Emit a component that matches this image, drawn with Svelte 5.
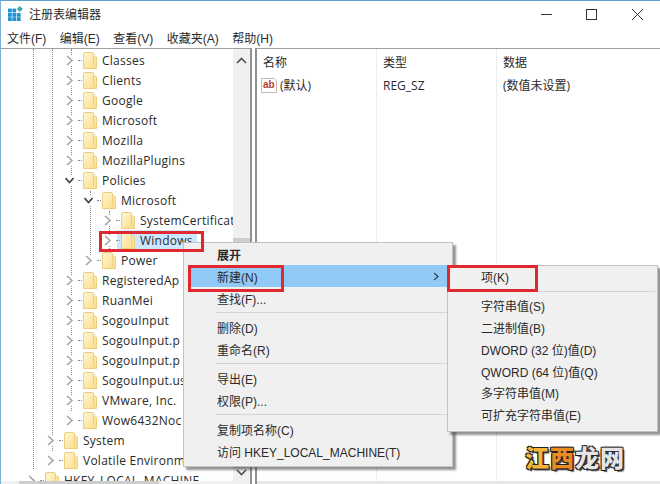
<script>
  const menus = ['文件(F)', '编辑(E)', '查看(V)', '收藏夹(A)', '帮助(H)'];
  const rows = [
    ['Classes', 2], ['Clients', 2], ['Google', 2], ['Microsoft', 2], ['Mozilla', 2], ['MozillaPlugins', 2],
    ['Policies', 2, true], ['Microsoft', 3, true], ['SystemCertificat', 4], ['Windows', 4, false, true], ['Power', 3],
    ['RegisteredAp', 2], ['RuanMei', 2], ['SogouInput', 2], ['SogouInput.p', 2], ['SogouInput.p', 2], ['SogouInput.us', 2],
    ['VMware, Inc.', 2], ['Wow6432Noc', 2], ['System', 1], ['Volatile Environm', 1], ['HKEY_LOCAL_MACHINE', 0]
  ];
  const guides = [
    { x: 32, top: 0, h: 420 }, { x: 51, top: 0, h: 402 }, { x: 70, top: 0, h: 362 },
    { x: 89, top: 142, h: 70 }, { x: 108, top: 162, h: 42 }
  ];
  const main = [
    [{ t: '展开', b: true }, { t: '新建(N)', hot: true, arrow: true }, { t: '查找(F)...' }],
    [{ t: '删除(D)' }, { t: '重命名(R)' }],
    [{ t: '导出(E)' }, { t: '权限(P)...' }],
    [{ t: '复制项名称(C)' }, { t: '访问 HKEY_LOCAL_MACHINE(T)' }]
  ];
  const sub = [
    [{ t: '项(K)' }],
    [{ t: '字符串值(S)' }, { t: '二进制值(B)' }, { t: 'DWORD (32 位)值(D)' }, { t: 'QWORD (64 位)值(Q)' }, { t: '多字符串值(M)' }, { t: '可扩充字符串值(E)' }]
  ];
</script>

<div class="win">
  <svg class="defs" width="0" height="0">
    <defs>
      <linearGradient id="fg" x1="0" y1="0" x2="1" y2="1">
        <stop offset="0" stop-color="#fff6d6"/><stop offset="1" stop-color="#fbdc85"/>
      </linearGradient>
    </defs>
  </svg>
  <header class="title">
    <svg class="logo" width="15" height="15" viewBox="0 0 15 15">
      <g fill="#1f93d2">
        <rect x="0" y="2.6" width="3.8" height="3.8"/><rect x="4.4" y="2.6" width="3.8" height="3.8"/>
        <rect x="0" y="7" width="3.8" height="3.8"/><rect x="4.4" y="7" width="3.8" height="3.8"/><rect x="8.8" y="7" width="3.8" height="3.8"/>
        <rect x="0" y="11.2" width="3.8" height="3.8"/><rect x="4.4" y="11.2" width="3.8" height="3.8"/><rect x="8.8" y="11.2" width="3.8" height="3.8"/>
      </g>
      <path d="M11.5 0 L15 3 L11.5 6 L9 3 Z" fill="#39a7b8"/>
    </svg>
    <span class="ttext">注册表编辑器</span>
    <div class="ctrls">
      <svg width="102" height="14" viewBox="0 0 102 14" fill="none" stroke="#333" stroke-width="1">
        <path d="M0 7.5H11"/>
        <rect x="45.5" y="2.5" width="10" height="10"/>
        <path d="M91 2L102 13M102 2L91 13"/>
      </svg>
    </div>
  </header>

  <nav class="menubar">
    {#each menus as m}<span>{m}</span>{/each}
  </nav>

  <div class="panes">
    <section class="left">
      <div class="tree">
        {#each guides as g}
          <i class="guide" style="left:{g.x}px;top:{g.top}px;height:{g.h}px"></i>
        {/each}
        {#each rows as [name, level, open, sel]}
          <div class="row" style="padding-left:{level * 19 + 26}px">
            {#if sel}<i class="selbar"></i>{/if}
            <svg class="chev" width="9" height="11" viewBox="0 0 9 11" fill="none" stroke={open ? '#404040' : '#a6a6a6'} stroke-width="1.6">
              {#if open}<path d="M0.5 3L4.5 7.5L8.5 3"/>{:else}<path d="M2 1L7 5.5L2 10"/>{/if}
            </svg>
            <i class="dash"></i>
            <svg class="folder" width="14" height="17" viewBox="0 0 14 17">
              <path d="M0.5 2Q0.5 0.5 2 0.5H9.5Q10.5 0.5 10.5 2V4H12Q13.5 4 13.5 5.5V16.5H0.5Z" fill="url(#fg)" stroke="#eccf7e"/>
              <path d="M10.5 4V14" stroke="#eccf7e" fill="none"/>
            </svg>
            <span class="label">{name}</span>
          </div>
        {/each}
      </div>
      <div class="vbar">
        <svg width="17" height="10" viewBox="0 0 17 10" fill="none" stroke="#505050" stroke-width="1.6"><path d="M4 8L8.5 3.5L13 8"/></svg>
        <div class="thumb"></div>
        <svg width="17" height="10" viewBox="0 0 17 10" fill="none" stroke="#505050" stroke-width="1.6"><path d="M4 2L8.5 6.5L13 2"/></svg>
      </div>
      <div class="hbar"><div class="hthumb"></div></div>
    </section>

    <section class="right">
      <div class="cols head">
        <span>名称</span><span>类型</span><span>数据</span>
      </div>
      <div class="cols">
        <span class="namecell">
          <svg width="16" height="15" viewBox="0 0 16 15">
            <path d="M0.5 0.5H13L15.5 3V14.5H0.5Z" fill="#fff" stroke="#c9b6ac"/>
            <text x="2" y="10" font-size="10" font-weight="700" font-family="Liberation Sans" fill="#c0392b">ab</text>
          </svg>
          (默认)
        </span>
        <span>REG_SZ</span>
        <span>(数值未设置)</span>
      </div>
      <div class="brand"><span class="o1">江</span><span class="o2">西</span><span class="w">龙网</span></div>
      <div class="hbar r"></div>
    </section>
  </div>

  <div class="menu m1">
    {#each main as group, i}
      {#if i}<hr />{/if}
      {#each group as it}
        <div class="item" class:hot={it.hot} class:b={it.b}>
          <span>{it.t}</span>
          {#if it.arrow}
            <svg width="6" height="9" viewBox="0 0 6 9" fill="none" stroke="#333" stroke-width="1.1"><path d="M1 0.8L5 4.5L1 8.2"/></svg>
          {/if}
        </div>
      {/each}
    {/each}
  </div>

  <div class="menu m2">
    {#each sub as group, i}
      {#if i}<hr />{/if}
      {#each group as it}
        <div class="item"><span>{it.t}</span></div>
      {/each}
    {/each}
  </div>

  <i class="mark k1"></i>
  <i class="mark k2"></i>
  <i class="mark k3"></i>
</div>

<style>
  :global(body) { margin: 0; background: #fff; }
  .win {
    position: relative;
    width: 660px;
    height: 484px;
    box-sizing: border-box;
    overflow: hidden;
    display: flex;
    flex-direction: column;
    background: #fff;
    border-top: 1px solid #5f9ccb;
    border-left: 1px solid #7fb1d6;
    font-family: "Open Sans", "Noto Sans CJK SC", sans-serif;
    font-size: 12px;
    color: #2a2a2a;
  }
  .defs { position: absolute; }
  .title {
    height: 25px;
    flex: none;
    display: flex;
    align-items: center;
    padding-left: 7px;
  }
  .logo { margin-right: 6px; }
  .ttext { font-family: "Noto Sans CJK SC", sans-serif; }
  .ctrls { margin-left: auto; margin-right: 17px; display: flex; }
  .menubar {
    height: 22px;
    flex: none;
    display: flex;
    align-items: center;
    gap: 13.5px;
    padding-left: 6px;
    font-family: "Liberation Sans", "Noto Sans CJK SC", sans-serif;
  }
  .panes { flex: 1; min-height: 0; display: flex; gap: 3px; }
  .left, .right {
    position: relative;
    box-sizing: border-box;
    border-top: 1px solid #a0a0a0;
    height: 100%;
    overflow: hidden;
  }
  .left {
    width: 251px;
    flex: none;
    display: grid;
    grid-template-columns: 1fr 17px;
    grid-template-rows: 1fr 3px;
    border-right: 2px solid #909090;
  }
  .tree { position: relative; overflow: hidden; padding-top: 1px; min-width: 0; }
  .guide { position: absolute; width: 0; border-left: 1px dotted #888; }
  .row {
    position: relative;
    box-sizing: border-box;
    height: 20px;
    display: flex;
    align-items: center;
    white-space: nowrap;
  }
  .selbar { position: absolute; left: 116px; width: 80px; top: 0; bottom: 0; background: #cce8ff; }
  .chev { position: relative; flex: none; margin-right: 4px; background: #fff; }
  .dash { position: relative; flex: none; width: 4px; border-top: 1px dotted #888; margin-right: 1px; }
  .folder { position: relative; flex: none; margin-right: 5px; margin-top: 1px; }
  .label { position: relative; letter-spacing: 0.25px; }
  .vbar {
    background: #f0f0f0;
    display: flex;
    flex-direction: column;
    padding: 6px 0 3px;
    box-sizing: border-box;
    min-height: 0;
  }
  .thumb { flex: 1; margin: 173px 0 0; background: #cdcdcd; }
  .hbar { grid-column: 1 / 3; background: #f0f0f0; }
  .hthumb { width: 140px; height: 100%; margin-left: 18px; background: #cdcdcd; }
  .right {
    flex: 1;
    border-left: 2px solid #909090;
    display: flex;
    flex-direction: column;
    min-width: 0;
  }
  .cols {
    flex: none;
    display: grid;
    grid-template-columns: 120px 120px 1fr;
    height: 20px;
    align-items: center;
    position: relative;
  }
  .head { height: 25px; padding-bottom: 1px; font-family: "Noto Sans CJK SC", sans-serif; }
  .cols span { padding-left: 6px; white-space: nowrap; }
  .namecell { display: flex; align-items: center; gap: 3px; padding-left: 4px !important; }
  .right::before, .right::after {
    content: "";
    position: absolute;
    top: 0;
    bottom: 0;
    width: 1px;
    background: #ececec;
  }
  .right::before { left: 119px; }
  .right::after { left: 239px; }
  .brand {
    position: absolute;
    left: 268px;
    top: 393px;
    font: 900 24px/30px "Noto Sans CJK SC", sans-serif;
    letter-spacing: 1px;
    text-shadow: -1px -1px 0 #222, 1px -1px 0 #222, -1px 1px 0 #222, 1px 1px 0 #222, 2px 2px 1px #555;
    white-space: nowrap;
  }
  .o1 { color: #f5b53a; }
  .o2 { color: #e98b24; }
  .w { color: #e4e4e4; }
  .hbar.r { position: absolute; left: 0; right: 0; bottom: 0; height: 3px; z-index: 1; background: #e6e6e6; }
  .menu {
    position: absolute;
    box-sizing: border-box;
    background: #f0f0f0;
    border: 1px solid #c2c2c2;
    box-shadow: 3px 3px 2px rgba(60, 60, 60, 0.55);
    font-family: "Liberation Sans", "Noto Sans CJK SC", sans-serif;
    padding: 0 2px;
    z-index: 2;
  }
  .m1 { left: 182px; top: 241px; width: 270px; height: 225px; }
  .m2 { left: 446px; top: 264px; width: 211px; height: 167px; z-index: 3; }
  .item {
    height: 22px;
    display: flex;
    align-items: center;
    justify-content: space-between;
    padding: 0 11px 0 31px;
    white-space: nowrap;
  }
  .m2 .item { height: 21.8px; }
  .item.b { font-weight: 700; }
  .item.hot { background: #91c9f7; margin-left: 2px; padding-left: 29px; }
  .menu hr {
    border: 0;
    height: 1px;
    background: #d4d4d4;
    margin: 3px 0 3px 30px;
  }
  .mark { position: absolute; box-sizing: border-box; border: 3px solid #e0282e; z-index: 4; }
  .k1 { left: 98px; top: 230px; width: 105px; height: 21px; }
  .k2 { left: 187px; top: 264px; width: 96px; height: 27px; }
  .k3 { left: 446px; top: 264px; width: 91px; height: 27px; }
</style>
